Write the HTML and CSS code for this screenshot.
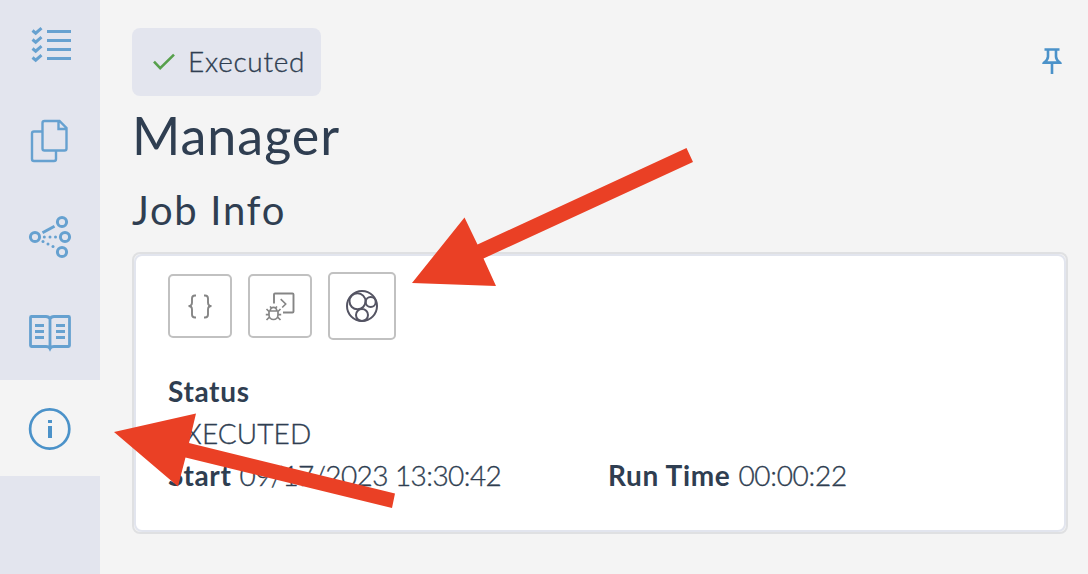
FILE: index.html
```html
<!DOCTYPE html>
<html lang="en">
<head>
<meta charset="utf-8">
<title>Manager</title>
<link rel="stylesheet" href="styles.css">
</head>
<body>
<div class="app">
  <nav class="sidebar">
    <a class="nav-item nav-first">
      <svg viewBox="0 0 100 92" width="100" height="92">
        <g stroke-width="3"><path d="M47 31.500h24M47 40.500h24M47 49.500h24M47 58.500h24"/>
        <path d="M32.500 30.500l3.200 2.700 5.800-5M32.500 39.500l3.200 2.700 5.800-5M32.500 48.500l3.200 2.700 5.800-5M32.500 57.500l3.200 2.700 5.800-5"/></g>
      </svg>
    </a>
    <a class="nav-item">
      <svg viewBox="0 92 100 96" width="100" height="96">
        <path d="M42 131.500h-8a2 2 0 0 0-2 2v25.500a2 2 0 0 0 2 2h20a2 2 0 0 0 2-2v-8"/>
        <path d="M44.500 121h15l7 7v20.500a2 2 0 0 1-2 2h-20a2 2 0 0 1-2-2v-25.500a2 2 0 0 1 2-2zM58.500 121v8h8"/>
      </svg>
    </a>
    <a class="nav-item">
      <svg viewBox="0 188 100 96" width="100" height="96">
        <g stroke-width="3"><circle cx="35" cy="237" r="4.600"/><circle cx="62" cy="222" r="4.600"/><circle cx="65" cy="237" r="4.600"/><circle cx="62" cy="252" r="4.600"/><path d="M42.500 232.800l12-6.500"/></g>
        <g class="dots"><circle cx="44.300" cy="237" r="1.500"/><circle cx="50" cy="237" r="1.500"/><circle cx="55.500" cy="237" r="1.500"/><circle cx="43" cy="241.500" r="1.500"/><circle cx="48" cy="244" r="1.500"/><circle cx="53" cy="246.500" r="1.500"/></g>
      </svg>
    </a>
    <a class="nav-item">
      <svg viewBox="0 284 100 96" width="100" height="96">
        <path stroke-width="2.800" d="M50 319q-1-2.500-4-2.500H31.500a1 1 0 0 0-1 1v28a1 1 0 0 0 1 1H46q3 0 4 2 1-2 4-2h14.500a1 1 0 0 0 1-1v-28a1 1 0 0 0-1-1H54q-3 0-4 2.500v29"/>
        <path stroke-width="3" d="M35 325.500h9M35 331.500h9M35 337.500h9M56 325.500h9M56 331.500h9M56 337.500h9"/>
      </svg>
    </a>
    <a class="nav-item active">
      <svg viewBox="0 380 100 96" width="100" height="96">
        <circle cx="49.700" cy="429" r="19.600" stroke-width="2.700"/>
        <path stroke-width="4" d="M50 426v12M50 420v3"/>
      </svg>
    </a>
  </nav>
  <main class="content">
    <header class="top">
      <div class="badge">
        <svg class="check" viewBox="0 0 24 20" width="24" height="20"><path d="M2 9.700l6.200 6.500L22 2.600"/></svg>
        <span class="badge-label">Executed</span>
      </div>
      <svg class="pin" viewBox="0 0 20 28" width="20" height="28"><path d="M2.500 2.500h15M6 3v6.500q0 3-3.500 6h15q-3.500-3-3.500-6V3M1 15.700h18M10 16v11"/></svg>
    </header>
    <h1 class="title">Manager</h1>
    <h2 class="subtitle">Job Info</h2>
    <section class="card">
      <div class="card-body">
        <div class="tools">
          <button class="tool" aria-label="Source"><svg viewBox="168 274 64 64" width="64" height="64"><path d="M196 295.500h-1q-3 0-3 3v4q0 3.500-3.500 3.500 3.500 0 3.500 3.500v5q0 3 3 3h1M204 295.500h1q3 0 3 3v4q0 3.500 3.500 3.500-3.500 0-3.500 3.500v5q0 3-3 3h-1"/></svg></button>
          <button class="tool" aria-label="Debug"><svg viewBox="248 274 64 64" width="64" height="64"><path d="M274 303.500v-9a1 1 0 0 1 1-1h17.500a1 1 0 0 1 1 1v17a1 1 0 0 1-1 1H283"/><path stroke-width="1.600" d="M280.700 299.200l5 4.800-3.500 3.500"/><path stroke-width="1.700" d="M269 311h9v4a4.500 4.500 0 0 1-9 0zM270.200 311a3.300 3.700 0 0 1 6.600 0M269 314.700h-3.200M278 314.700h3.200M269 311.500l-2.500-2.500M278 311.500l2.500-2.500M269.500 317l-3 3M277.500 317l3 3M271.500 308l-1.500-1.500M275.500 308l1.500-1.500"/></svg></button>
          <button class="tool large" aria-label="Clusters"><svg viewBox="328 272 68 68" width="68" height="68"><circle cx="362" cy="306" r="15"/><circle cx="357.500" cy="301.300" r="8"/><circle cx="370.700" cy="302" r="5"/><circle cx="362" cy="315" r="6"/></svg></button>
        </div>
        <dl class="facts">
          <div class="row"><dt>Status</dt></div>
          <div class="row"><dd class="state">EXECUTED</dd></div>
          <div class="row split">
            <div class="pair"><dt>Start</dt><dd class="date">09/17/2023 13:30:42</dd></div>
            <div class="pair"><dt>Run Time</dt><dd class="time">00:00:22</dd></div>
          </div>
        </dl>
      </div>
    </section>
  </main>
  <svg class="arrows" viewBox="0 0 1088 574" width="1088" height="574">
    <path d="M412 283L464.500 217.500 477.500 244.500 686.500 148 693 162 483.500 258.500 496 286z"/>
    <path d="M114 432L196 413.500 189 443 395 493.500 392 508 185.500 457.500 178 486.500z"/>
  </svg>
</div>
</body>
</html>
```
FILE: styles.css
```css
* { box-sizing: border-box; }
body { margin: 0; background: #f4f4f4; color: #2f3e51; font-family: Lato, "Open Sans", sans-serif; }
.app { position: relative; display: flex; width: 1088px; height: 574px; overflow: hidden; }
.sidebar { width: 100px; flex: none; background: #e3e5ee; }
.nav-item { display: block; height: 96px; }
.nav-first { height: 92px; }
.nav-item svg { display: block; fill: none; stroke: #66a1d0; stroke-width: 2.400; }
.nav-item .dots { fill: #66a1d0; stroke: none; }
.active { background: #f4f4f4; }
.nav-item.active svg { stroke: #4b92c9; }
.content { flex: 1; padding: 28px 20px 0 32px; }
.top { display: flex; justify-content: space-between; height: 68px; }
.badge { display: flex; align-items: center; width: 189px; height: 68px; padding-left: 20px; border-radius: 8px; background: #e3e5ee; }
.check { fill: none; stroke: #57a04c; stroke-width: 2.600; }
.badge-label { margin-left: 12px; padding-bottom: 3px; font-size: 28px; font-weight: 300; letter-spacing: .7px; white-space: nowrap; -webkit-text-stroke: .35px; }
.pin { margin: 19px 6px 0 0; fill: none; stroke: #4b92c9; stroke-width: 2.600; }
.title { height: 84px; margin: 0; font-size: 52px; font-weight: 400; line-height: 79px; letter-spacing: 1px; }
.subtitle { height: 72px; margin: 0; font-size: 40px; font-weight: 400; line-height: 60px; letter-spacing: 1.7px; }
.card { height: 282px; border: 2px solid #dfe0e2; border-radius: 8px; background: #f4f4f4; }
.card-body { height: 278px; padding: 16px 32px; border: 2px solid #e2e5ee; border-radius: 8px; background: #fff; }
.tools { display: flex; align-items: center; gap: 16px; height: 68px; }
.tool { display: flex; align-items: center; justify-content: center; width: 64px; height: 64px; padding: 0; border: 2px solid #c1c1c1; border-radius: 5px; background: #fff; }
.tool svg { flex: none; fill: none; stroke: #858585; stroke-width: 1.900; }
.tool.large { width: 68px; height: 68px; }
.tool.large svg { stroke: #545463; stroke-width: 2; }
.facts { margin: 31px 0 0; font-size: 28px; line-height: 41px; }
.row { height: 42px; }
.split { display: grid; grid-template-columns: 440px 1fr; }
.pair { display: flex; gap: 8px; white-space: nowrap; }
dt { font-weight: 700; letter-spacing: .65px; }
dd { margin: 0; font-weight: 300; -webkit-text-stroke: .35px; }
.state { letter-spacing: .1px; }
.date { letter-spacing: -.58px; }
.time { letter-spacing: -.3px; }
.arrows { position: absolute; inset: 0; fill: #ea4025; pointer-events: none; }
```
